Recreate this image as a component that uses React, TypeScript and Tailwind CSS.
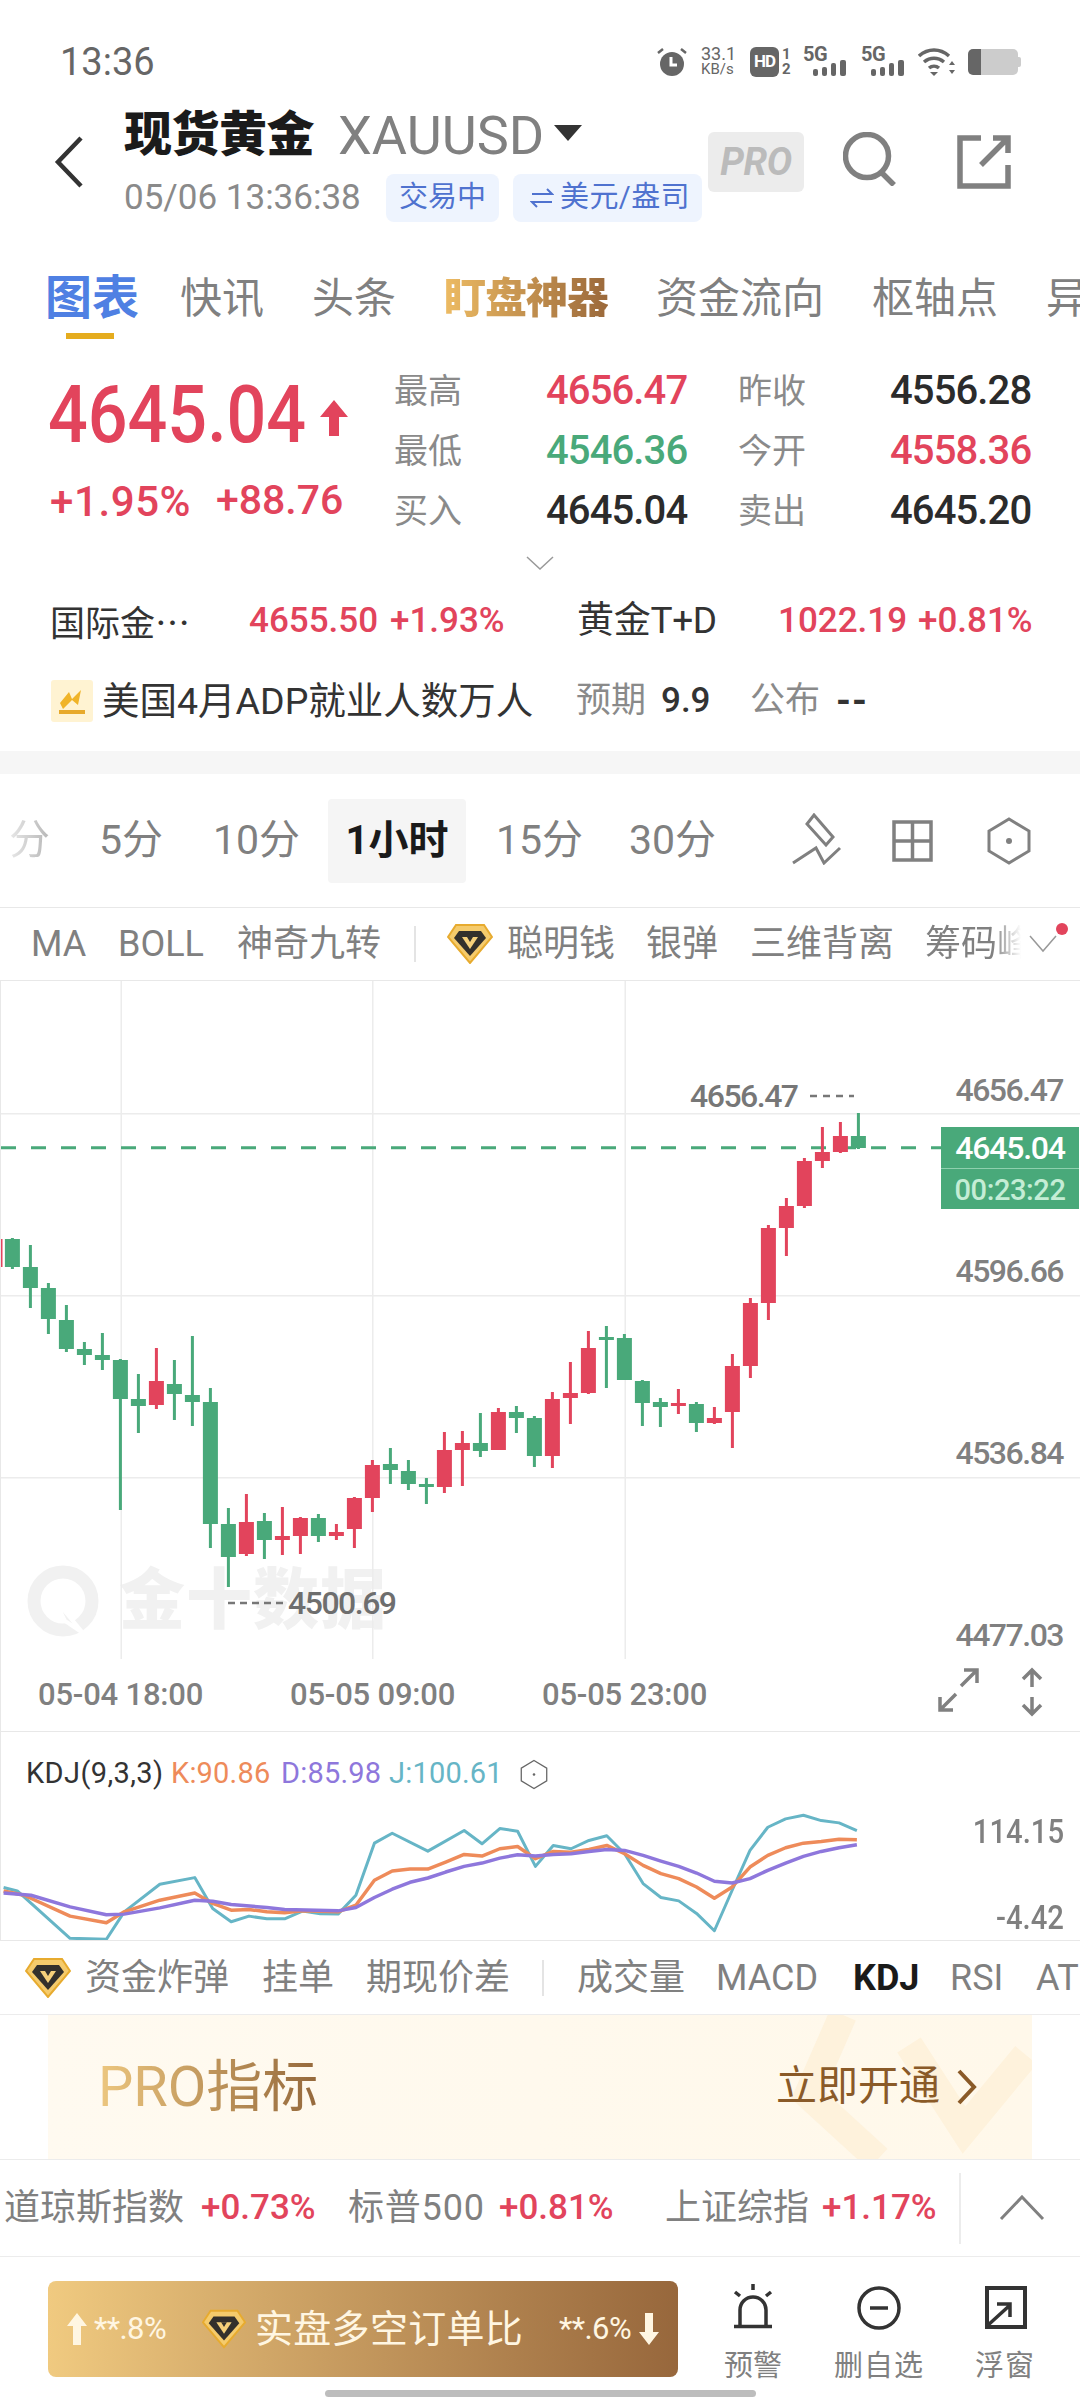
import React from 'react';

const RED = '#e2445c';
const GREEN = '#49a97a';

// [wickTop, bodyTop, bodyBottom, wickBottom, isUp]
const C: [number, number, number, number, number][] = [
  [1237, 1238, 1266, 1268, 0], [1244, 1266, 1287, 1307, 0], [1282, 1287, 1318, 1333, 0], [1304, 1319, 1348, 1351, 0],
  [1341, 1348, 1354, 1364, 0], [1332, 1354, 1359, 1369, 0], [1358, 1359, 1398, 1509, 0], [1373, 1398, 1405, 1432, 0],
  [1347, 1380, 1404, 1408, 1], [1359, 1383, 1393, 1419, 0], [1335, 1394, 1401, 1425, 0], [1387, 1401, 1523, 1547, 0],
  [1507, 1523, 1556, 1586, 0], [1493, 1521, 1553, 1555, 1], [1512, 1520, 1539, 1558, 0], [1506, 1535, 1539, 1554, 1],
  [1516, 1517, 1535, 1553, 1], [1513, 1517, 1535, 1541, 0], [1523, 1531, 1535, 1539, 1], [1496, 1497, 1528, 1547, 1],
  [1459, 1464, 1497, 1511, 1], [1447, 1463, 1469, 1483, 0], [1459, 1470, 1483, 1489, 0], [1477, 1483, 1485, 1503, 0],
  [1431, 1449, 1486, 1492, 1], [1430, 1442, 1449, 1485, 1], [1412, 1442, 1450, 1456, 0], [1407, 1411, 1449, 1449, 1],
  [1405, 1411, 1417, 1432, 0], [1415, 1417, 1455, 1466, 0], [1391, 1398, 1455, 1467, 1], [1361, 1392, 1397, 1423, 1],
  [1330, 1347, 1392, 1393, 1], [1325, 1336, 1338, 1387, 0], [1333, 1337, 1379, 1379, 0], [1379, 1380, 1402, 1425, 0],
  [1397, 1401, 1406, 1426, 0], [1388, 1402, 1405, 1413, 1], [1401, 1403, 1422, 1431, 0], [1406, 1417, 1422, 1423, 1],
  [1353, 1365, 1411, 1447, 1], [1297, 1302, 1365, 1377, 1], [1224, 1227, 1302, 1319, 1], [1197, 1205, 1227, 1255, 1],
  [1157, 1160, 1205, 1207, 1], [1126, 1151, 1160, 1167, 1], [1121, 1135, 1151, 1152, 1], [1112, 1135, 1147, 1148, 0],
];

const J = [[0,622],[20,632],[97,775],[150,778],[176,695],[228,612],[279,592],[305,685],[332,725],[358,708],[384,716],[410,716],[436,693],[462,701],[488,702],[514,645],[541,488],[567,458],[619,512],[672,450],[698,490],[724,444],[750,452],[776,558],[802,495],[828,505],[854,480],[880,466],[906,520],[933,610],[959,652],[985,662],[1011,700],[1037,752],[1063,630],[1089,510],[1115,440],[1141,415],[1167,404],[1193,420],[1219,427],[1245,450]];
const K = [[0,632],[30,645],[97,708],[150,728],[176,695],[228,660],[279,638],[305,670],[332,690],[358,688],[384,695],[410,698],[436,692],[488,695],[514,675],[541,600],[567,572],[593,566],[619,566],[645,545],[672,522],[698,527],[724,505],[750,498],[776,535],[802,513],[828,515],[854,507],[880,495],[906,520],[933,555],[959,580],[985,595],[1011,620],[1037,654],[1063,620],[1089,560],[1115,525],[1141,502],[1167,488],[1193,483],[1219,476],[1245,478]];
const D = [[0,638],[40,645],[97,680],[150,704],[176,702],[228,683],[279,660],[305,663],[332,673],[384,682],[410,688],[488,692],[514,682],[541,652],[567,627],[593,606],[619,593],[645,575],[672,558],[698,548],[724,533],[750,523],[776,527],[802,522],[828,520],[854,513],[880,507],[906,510],[933,525],[959,542],[985,558],[1011,578],[1037,603],[1063,608],[1089,595],[1115,570],[1141,548],[1167,528],[1193,513],[1219,502],[1245,493]];
const pts = (a: number[][]) => a.map(([x, y]) => `${(x / 1.452).toFixed(1)},${(y / 3 + 1680 - 1731).toFixed(1)}`).join(' ');

const Gem = ({ className = '' }: { className?: string }) => (
  <svg viewBox="0 0 46 40" className={className}>
    <polygon points="9,1 37,1 45,13 23,39 1,13" fill="#f5cb6c" stroke="#e7ab2f" strokeWidth="2" />
    <polygon points="12,7 34,7 39,14 23,32 7,14" fill="#33302c" />
    <polygon points="15,13 31,13 23,25" fill="#f6d07a" />
    <polygon points="20,13 26,13 23,18" fill="#33302c" />
  </svg>
);

const Hex = ({ className = '', stroke = 3 }: { className?: string; stroke?: number }) => (
  <svg viewBox="0 0 44 48" className={className} fill="none">
    <polygon points="22,2 42,14 42,34 22,46 2,34 2,14" stroke="currentColor" strokeWidth={stroke} />
    <circle cx="22" cy="24" r={stroke} fill="currentColor" />
  </svg>
);

function Signal() {
  return (
    <svg viewBox="0 0 34 16" className="w-[34px] h-[16px] mt-[-2px] ml-[10px]" fill="#666">
      <rect x="0" y="9" width="5" height="7" rx="2" />
      <rect x="9" y="7" width="5" height="9" rx="2" />
      <rect x="18" y="3" width="5" height="13" rx="2" />
      <rect x="27" y="0" width="6" height="16" rx="2" />
    </svg>
  );
}

function FiveG() {
  return (
    <div className="flex flex-col w-[44px] shrink-0 h-[30px]">
      <span className="text-[20px] leading-[15px] font-bold text-[#666] tracking-[-0.5px]">5G</span>
      <Signal />
    </div>
  );
}

function StatusBar() {
  return (
    <div className="h-[109px] flex items-center shrink-0 pt-[14px]">
      <span className="ml-[60px] text-[38px] text-[#666] leading-none">13:36</span>
      <div className="ml-auto mr-[59px] flex items-center h-[32px]">
        <svg viewBox="0 0 30 30" className="w-[30px] h-[30px]">
          <circle cx="15" cy="17" r="12" fill="#666" />
          <path d="M14 10v8h6" stroke="#fff" strokeWidth="3" fill="none" />
          <path d="M1 6l5-4M29 6l-5-4" stroke="#666" strokeWidth="2.5" />
        </svg>
        <div className="ml-[14px] w-[49px] flex flex-col text-[#666]">
          <span className="text-[18px] leading-[15px]">33.1</span>
          <span className="text-[15px] leading-[15px] mt-[1px]">KB/s</span>
        </div>
        <div className="w-[29px] h-[30px] rounded-[6px] bg-[#666] text-white text-[17px] font-bold flex items-center justify-center tracking-[-1px]">HD</div>
        <div className="ml-[3px] w-[21px] flex flex-col text-[#666] font-bold text-[15px] leading-[15px]">
          <span>1</span>
          <span>2</span>
        </div>
        <FiveG />
        <div className="w-[14px]" />
        <FiveG />
        <svg viewBox="0 0 38 30" className="ml-[13px] w-[38px] h-[30px]" fill="none" stroke="#666" strokeWidth="3.5">
          <path d="M1 9c9-8 21-8 30 0M6 15c6-5 14-5 20 0M11 21c3-2.5 7-2.5 10 0" />
          <path d="M12 25h8l-4 4z" fill="#666" stroke="none" />
          <path d="M31 18l3-4 3 4zM31 23l3 4 3-4z" fill="#666" stroke="none" />
        </svg>
        <div className="ml-[12px] w-[50px] h-[26px] flex rounded-[5px] overflow-hidden">
          <div className="w-[13px] bg-[#666]" />
          <div className="flex-1 bg-[#ccc]" />
        </div>
        <div className="w-[3px] h-[10px] bg-[#ccc] rounded-r-[2px]" />
      </div>
    </div>
  );
}

function Header() {
  return (
    <div className="h-[131px] flex shrink-0 relative">
      <svg viewBox="0 0 30 52" className="ml-[54px] mt-[27px] w-[30px] h-[52px] shrink-0" fill="none" stroke="#333" strokeWidth="4.5">
        <path d="M27 2L4 26l23 24" />
      </svg>
      <div className="ml-[40px] flex flex-col">
        <div className="h-[52px] flex items-center">
          <span className="text-[48px] font-black text-[#1b1b1b] tracking-[-0.5px]">现货黄金</span>
          <span className="ml-[24px] text-[54px] text-[#808080] tracking-[0px]">XAUUSD</span>
          <svg viewBox="0 0 28 16" className="ml-[10px] mt-[-4px] w-[28px] h-[16px]"><path d="M0 0h28L14 16z" fill="#333" /></svg>
        </div>
        <div className="mt-[13px] h-[48px] flex items-center">
          <span className="w-[262px] text-[35px] text-[#8a8a8a]">05/06 13:36:38</span>
          <span className="w-[113px] h-[48px] rounded-[8px] bg-[#eef4fe] text-[#4f72cf] text-[29px] flex items-center justify-center">交易中</span>
          <span className="ml-[14px] w-[189px] h-[48px] rounded-[8px] bg-[#eef4fe] text-[#4f72cf] text-[29px] tracking-[0.4px] flex items-center">
            <svg viewBox="0 0 24 22" className="ml-[17px] w-[24px] h-[22px]" fill="none" stroke="#4f72cf" strokeWidth="2">
              <path d="M2 7h20l-5-5M22 15H2l5 5" />
            </svg>
            <span className="ml-[6px]">美元/盎司</span>
          </span>
        </div>
      </div>
      <div className="absolute left-[708px] top-[23px] flex">
        <div className="w-[96px] h-[60px] rounded-[6px] bg-[#ececec] flex items-center justify-center">
          <span className="text-[38px] font-bold italic text-[#bbbbbb] tracking-[-0.5px]">PRO</span>
        </div>
        <svg viewBox="0 0 54 54" className="ml-[39px] w-[54px] h-[54px]" fill="none" stroke="#808080" strokeWidth="5.5">
          <circle cx="24" cy="24" r="21.5" />
          <path d="M38 40l13 13" />
        </svg>
        <svg viewBox="0 0 54 54" className="ml-[60px] mt-[3px] w-[54px] h-[54px]" fill="none" stroke="#808080" strokeWidth="5.5">
          <path d="M24 3H3v48h48V30M51 18V3H36M50 4L24 30" />
        </svg>
      </div>
    </div>
  );
}

function Tabs() {
  return (
    <div className="shrink-0 h-[120px] pt-[32px]">
      <div className="flex items-center h-[52px] gap-[48px] ml-[45px] text-[42px] text-[#808080]">
        <span className="text-[47px] font-bold text-[#4f80e3] mr-[-7px]">图表</span>
        <span>快讯</span>
        <span>头条</span>
        <span className="font-black tracking-[-1px] bg-linear-to-r from-[#edbb63] to-[#9b693b] bg-clip-text text-transparent">盯盘神器</span>
        <span>资金流向</span>
        <span>枢轴点</span>
        <span>异</span>
      </div>
      <div className="ml-[66px] mt-[9px] w-[48px] h-[6px] bg-[#e5ac1e]" />
    </div>
  );
}

const statNum = 'text-[40px] font-medium tracking-[-0.9px]';

function Stat({ label, value, color }: { label: string; value: string; color: string }) {
  return (
    <>
      <span className="text-[34px] text-[#8a8a8a]">{label}</span>
      <span className={`${statNum} ${color}`}>{value}</span>
    </>
  );
}

function Price() {
  return (
    <div className="shrink-0 flex">
      <div className="ml-[48px] w-[346px] flex flex-col">
        <div className="h-[110px] flex items-center">
          <span className="text-[80px] leading-none font-medium origin-left scale-x-[0.875] mr-[-36px] text-[#e2445c]">4645.04</span>
          <svg viewBox="0 0 30 36" className="ml-[12px] mt-[6px] w-[30px] h-[36px]" fill="#e2445c">
            <path d="M15 0l14 17h-9v19h-10V17H1z" />
          </svg>
        </div>
        <div className="h-[62px] ml-[2px] flex items-center text-[41px] font-medium text-[#e2445c]">
          <span className="w-[166px] text-[42px] tracking-[0.6px]">+1.95%</span>
          <span>+88.76</span>
        </div>
      </div>
      <div className="mt-[1px] grid grid-cols-[152px_192px_152px_150px] auto-rows-[60px] items-center">
        <Stat label="最高" value="4656.47" color="text-[#e2445c]" />
        <Stat label="昨收" value="4556.28" color="text-[#2b2b2b]" />
        <Stat label="最低" value="4546.36" color="text-[#49a97a]" />
        <Stat label="今开" value="4558.36" color="text-[#e2445c]" />
        <Stat label="买入" value="4645.04" color="text-[#2b2b2b]" />
        <Stat label="卖出" value="4645.20" color="text-[#2b2b2b]" />
      </div>
    </div>
  );
}

const rowNum = 'text-[35px] font-medium text-[#e2445c]';

function Quotes() {
  return (
    <div className="shrink-0">
      <div className="h-[50px] flex justify-center pt-[15px]">
        <svg viewBox="0 0 28 14" className="w-[28px] h-[14px]" fill="none" stroke="#999" strokeWidth="1.5"><path d="M1 1l13 12L27 1" /></svg>
      </div>
      <div className="h-[60px] flex items-center ml-[50px]">
        <span className="w-[199px] text-[35px] text-[#333] font-['Noto_Sans_CJK_SC',sans-serif]">国际金…</span>
        <span className={`w-[141px] ${rowNum}`}>4655.50</span>
        <span className={`w-[187px] ${rowNum}`}>+1.93%</span>
        <span className="w-[201px] text-[37px] text-[#333] tracking-[-0.3px]">黄金T+D</span>
        <span className={`w-[140px] ${rowNum}`}>1022.19</span>
        <span className={rowNum}>+0.81%</span>
      </div>
      <div className="h-[20px]" />
      <div className="h-[60px] flex items-center ml-[51px]">
        <div className="w-[42px] h-[42px] bg-[#fff3d2] rounded-[3px] flex items-center justify-center">
          <svg viewBox="0 0 32 32" className="w-[32px] h-[32px]" fill="none">
            <path d="M4 18L13 7l3 7 9-9-3 15-6-5-9 9" fill="#f0b429" />
            <path d="M3 27h26" stroke="#e7a92a" strokeWidth="4" />
          </svg>
        </div>
        <span className="ml-[9px] w-[474px] text-[37.500px]  text-[#333]">美国4月ADP就业人数万人</span>
        <span className="w-[85px] text-[35px] text-[#8a8a8a]">预期</span>
        <span className="w-[89px] text-[35px] font-medium text-[#333]">9.9</span>
        <span className="w-[86px] text-[35px] text-[#8a8a8a]">公布</span>
        <span className="text-[38px] font-bold text-[#333] tracking-[1px]">--</span>
      </div>
      <div className="h-[20px]" />
    </div>
  );
}

const period = 'text-[41px] text-[#808080]';

function Periods() {
  return (
    <div className="shrink-0 h-[134px] flex items-center border-b border-[#e8e8e8] relative">
      <span className="ml-[9px] w-[90px] text-[41px] bg-linear-to-r from-[#e8e8e8] to-[#808080] bg-clip-text text-transparent">
        <span className="inline-block">分</span>
      </span>
      <span className={`w-[114px] ${period}`}>5分</span>
      <span className={`w-[115px] ${period}`}>10分</span>
      <span className="w-[138px] h-[84px] rounded-[4px] bg-[#f5f5f5] flex items-center justify-center text-[40px] font-bold text-[#1a1a1a]">1小时</span>
      <span className={`ml-[30px] w-[133px] ${period}`}>15分</span>
      <span className={`w-[163px] ${period}`}>30分</span>
      <svg viewBox="0 0 50 52" className="w-[50px] h-[52px] shrink-0 mt-[-4px]" fill="none" stroke="#808080" strokeWidth="3">
        <path d="M22 2l19 22-7 8L15 11z" />
        <path d="M1 50l23-15 8 15 16-15" />
      </svg>
      <svg viewBox="0 0 41 42" className="ml-[50px] w-[41px] h-[42px] shrink-0" fill="none" stroke="#808080" strokeWidth="3.5">
        <rect x="2" y="2" width="37" height="38" />
        <path d="M20.500 2v38M2 21h37" />
      </svg>
      <Hex className="ml-[54px] w-[44px] h-[48px] shrink-0 text-[#808080]" />
    </div>
  );
}

const ind = 'text-[36px] text-[#808080] shrink-0';

function Indicators() {
  return (
    <div className="shrink-0 h-[73px] flex items-center border-b border-[#e8e8e8] relative overflow-hidden">
      <span className={`ml-[31px] w-[87px] ${ind}`}>MA</span>
      <span className={`w-[119px] ${ind}`}>BOLL</span>
      <span className={`w-[177px] ${ind}`}>神奇九转</span>
      <span className="w-[2px] h-[36px] bg-[#e4e4e4] mr-[31px] shrink-0" />
      <Gem className="w-[46px] h-[40px] mr-[14px] shrink-0" />
      <span className={`w-[139px] ${ind}`}>聪明钱</span>
      <span className={`w-[104px] ${ind}`}>银弹</span>
      <span className={`w-[175px] ${ind}`}>三维背离</span>
      <span className="w-[96px] shrink-0 text-[36px] whitespace-nowrap overflow-hidden bg-linear-to-r from-[#808080] from-70% to-[#fff] bg-clip-text text-transparent">筹码峰</span>
      <svg viewBox="0 0 28 18" className="ml-[8px] w-[28px] h-[18px] shrink-0" fill="none" stroke="#999" strokeWidth="1.5"><path d="M1 1l13 15L27 1" /></svg>
      <span className="absolute left-[1056px] top-[15px] w-[12px] h-[12px] rounded-full bg-[#e2445c]" />
    </div>
  );
}

const axis = 'absolute right-[17px] text-[32px] font-medium text-[#808080] tracking-[-1.5px] leading-none';

function Chart() {
  return (
    <div className="shrink-0 relative h-[678px] border-l border-[#e8e8e8]">
      <div className="absolute left-[26px] top-[570px] flex items-center">
        <svg viewBox="0 0 72 72" className="w-[72px] h-[72px]" fill="none">
          <circle cx="36" cy="36" r="29" stroke="#f1f1f1" strokeWidth="13" />
          <path d="M26 32l30 36-18-12z" fill="#f1f1f1" stroke="#fff" strokeWidth="4" />
        </svg>
        <span className="ml-[20px] text-[66px] font-black text-[#f1f1f1] tracking-[1px]">金十数据</span>
      </div>
      <svg viewBox="0 0 1079 678" className="absolute inset-0 w-[1079px] h-[678px]">
        {[132, 314, 496].map((y) => <rect key={y} x="0" y={y} width="1079" height="1.500" fill="#ececec" />)}
        {[119.500, 371, 623.500].map((x) => <rect key={x} x={x} y="0" width="1.500" height="678" fill="#ececec" />)}
        <line x1="0" y1="166.700" x2="940" y2="166.700" stroke={GREEN} strokeWidth="3" strokeDasharray="15 15" />
        <rect x="0" y="258" width="1.500" height="28" fill={RED} />
        {C.map((c, i) => {
          const x = 11.400 + 18 * i;
          const col = c[4] ? RED : GREEN;
          return (
            <g key={i} fill={col}>
              <rect x={x - 1.500} y={c[0] - 980} width="3" height={c[3] - c[0]} />
              <rect x={x - 7.500} y={c[1] - 980} width="15" height={Math.max(c[2] - c[1], 3)} />
            </g>
          );
        })}
        <line x1="809" y1="115" x2="853" y2="115" stroke="#777" strokeWidth="2.500" strokeDasharray="7 6" />
        <line x1="227" y1="622" x2="282" y2="622" stroke="#777" strokeWidth="2.500" strokeDasharray="7 5" />
      </svg>
      <span className={`${axis} top-[93px]`}>4656.47</span>
      <span className="absolute left-[689px] top-[99px] text-[32px] leading-none font-medium text-[#777] tracking-[-1.5px]">4656.47</span>
      <span className="absolute left-[287px] top-[606px] text-[32px] leading-none font-medium text-[#6e6e6e] tracking-[-1.5px]">4500.69</span>
      <div className="absolute left-[940px] top-[146px] w-[138px] h-[82px] bg-[#49a97a] flex flex-col items-center">
        <span className="h-[42px] w-full flex items-center justify-center text-[32px] font-medium text-white tracking-[-1.2px] border-b border-[#8fd0ae]">4645.04</span>
        <span className="flex-1 flex items-center justify-center text-[29px] font-medium text-[#c4edd5] tracking-[-0.4px]">00:23:22</span>
      </div>
      <span className={`${axis} top-[274px]`}>4596.66</span>
      <span className={`${axis} top-[456px]`}>4536.84</span>
      <span className={`${axis} top-[638px]`}>4477.03</span>
    </div>
  );
}

function TimeRow() {
  return (
    <div className="shrink-0 h-[73px] flex items-center border-b border-l border-[#e8e8e8] text-[31px] text-[#808080] font-medium tracking-[-0.2px]">
      <span className="ml-[37px] w-[252px]">05-04 18:00</span>
      <span className="w-[252px]">05-05 09:00</span>
      <span className="w-[394px]">05-05 23:00</span>
      <svg viewBox="0 0 44 46" className="w-[44px] h-[46px] mt-[-10px] shrink-0" fill="none" stroke="#808080" strokeWidth="3.5">
        <path d="M25 19L41 3M28 3h13v13M20 27L4 43M4 30v13h13" />
      </svg>
      <svg viewBox="0 0 24 50" className="ml-[40px] w-[24px] h-[50px] mt-[-6px] shrink-0" fill="none" stroke="#808080" strokeWidth="3.5">
        <path d="M12 20V3M3 12l9-9 9 9M12 30v17M3 38l9 9 9-9" />
      </svg>
    </div>
  );
}

const kdjAxis = 'absolute right-[16px] origin-right scale-x-[0.86] text-[34px] font-medium leading-none text-[#808080]';

function Kdj() {
  return (
    <div className="shrink-0 h-[209px] relative border-b border-l border-[#e8e8e8]">
      <svg viewBox="0 0 1079 209" className="absolute inset-0 w-[1079px] h-[208px]" fill="none" strokeWidth="3" strokeLinejoin="round">
        <polyline points={pts(J)} stroke="#66b5c6" />
        <polyline points={pts(K)} stroke="#ee8b5a" strokeWidth="3.500" />
        <polyline points={pts(D)} stroke="#8e77dc" strokeWidth="3.500" />
      </svg>
      <div className="relative flex items-center h-[42px] mt-[21px] text-[29px]">
        <span className="ml-[25px] w-[145px] text-[#333] tracking-[0.4px]">KDJ(9,3,3)</span>
        <span className="w-[110px] text-[#ee8b5a] tracking-[0.2px]">K:90.86</span>
        <span className="w-[108px] text-[#8e77dc] tracking-[0.2px]">D:85.98</span>
        <span className="w-[131px] text-[#66b5c6] tracking-[0.2px]">J:100.61</span>
        <Hex className="w-[28px] h-[31px] text-[#666]" stroke={2} />
      </div>
      <span className={`${kdjAxis} top-[82px]`}>114.15</span>
      <span className={`${kdjAxis} top-[168px]`}>-4.42</span>
    </div>
  );
}

const ind2 = 'text-[36px] text-[#808080] shrink-0';

function Indicators2() {
  return (
    <div className="shrink-0 h-[74px] flex items-center border-b border-[#ececec] overflow-hidden whitespace-nowrap">
      <Gem className="ml-[25px] w-[46px] h-[40px] mr-[14px] shrink-0" />
      <span className={`w-[177px] ${ind2}`}>资金炸弹</span>
      <span className={`w-[104px] ${ind2}`}>挂单</span>
      <span className={`w-[176px] ${ind2}`}>期现价差</span>
      <span className="w-[2px] h-[36px] bg-[#e4e4e4] mr-[33px] shrink-0" />
      <span className={`w-[139px] ${ind2}`}>成交量</span>
      <span className={`w-[137px] ${ind2}`}>MACD</span>
      <span className="w-[97px] text-[36px] font-bold text-[#1a1a1a] shrink-0">KDJ</span>
      <span className={`w-[86px] ${ind2}`}>RSI</span>
      <span className={ind2}>AT</span>
    </div>
  );
}

function Banner() {
  return (
    <div className="shrink-0 h-[144px] mx-[48px] relative flex items-center bg-linear-to-r from-[#fffaf0] to-[#fff8ea] overflow-hidden">
      <svg viewBox="0 0 984 144" className="absolute inset-0 w-[984px] h-[144px]" fill="none" stroke="#fef2dc" strokeWidth="28">
        <path d="M795 0L760 80l70 64" />
        <path d="M861 30l55 85 62-75" />
      </svg>
      <span className="relative ml-[50px] text-[56px] bg-linear-to-r from-[#edc77f] to-[#95693c] bg-clip-text text-transparent">PRO指标</span>
      <span className="relative ml-auto text-[41px] text-[#8a5a28]">立即开通</span>
      <svg viewBox="0 0 22 36" className="relative ml-[16px] mr-[54px] w-[22px] h-[36px]" fill="none" stroke="#8a5a28" strokeWidth="4"><path d="M3 2l15 16L3 34" /></svg>
    </div>
  );
}

function Indices() {
  return (
    <div className="shrink-0 h-[98px] flex items-center border-y border-[#ececec]">
      <span className="ml-[4px] w-[197px] text-[36px] text-[#808080]">道琼斯指数</span>
      <span className={`w-[147px] ${rowNum}`}>+0.73%</span>
      <span className="w-[151px] text-[36px] text-[#808080] tracking-[0.8px]">标普500</span>
      <span className={`w-[166px] ${rowNum}`}>+0.81%</span>
      <span className="w-[157px] text-[36px] text-[#808080]">上证综指</span>
      <span className={`w-[137px] ${rowNum}`}>+1.17%</span>
      <span className="w-[2px] h-[71px] bg-[#ececec] shrink-0" />
      <svg viewBox="0 0 46 26" className="ml-[38px] w-[46px] h-[26px]" fill="none" stroke="#808080" strokeWidth="3"><path d="M2 24L23 2l21 22" /></svg>
    </div>
  );
}

const toolLabel = 'mt-[19px] text-[29px] text-[#808080] leading-[30px]';

function BottomBar() {
  return (
    <div className="flex-1 flex flex-col">
      <div className="flex items-start pt-[24px]">
        <div className="ml-[48px] w-[630px] h-[96px] rounded-[8px] bg-linear-to-r from-[#f0ca80] to-[#97673c] flex items-center text-[#fff6e2]">
          <svg viewBox="0 0 20 32" className="ml-[19px] w-[20px] h-[32px]" fill="#fff6e2"><path d="M10 0l10 13h-6v19H6V13H0z" /></svg>
          <span className="ml-[7px] w-[108px] text-[31px] tracking-[-0.6px]">**.8%</span>
          <Gem className="w-[44px] h-[40px]" />
          <span className="ml-[9px] w-[304px] text-[38px] tracking-[0.3px]">实盘多空订单比</span>
          <span className="w-[80px] text-[31px] tracking-[-0.6px]">**.6%</span>
          <svg viewBox="0 0 20 32" className="w-[20px] h-[32px]" fill="#fff6e2"><path d="M10 32l10-13h-6V0H6v19H0z" /></svg>
        </div>
        <div className="mt-[3px] ml-[15px] w-[120px] flex flex-col items-center">
          <svg viewBox="0 0 42 48" className="w-[42px] h-[48px]" fill="none" stroke="#333" strokeWidth="3.500">
            <path d="M21 0v6M3 8l5 4M39 8l-5 4M8 41V26a13 13 0 0 1 26 0v15M2 42.500h38" />
          </svg>
          <span className={toolLabel}>预警</span>
        </div>
        <div className="mt-[3px] ml-[10px] w-[112px] flex flex-col items-center">
          <svg viewBox="0 0 48 48" className="w-[48px] h-[48px]" fill="none" stroke="#333" strokeWidth="3.500">
            <circle cx="24" cy="24" r="20" />
            <path d="M15 24h18" />
          </svg>
          <span className={`${toolLabel} tracking-[1px]`}>删自选</span>
        </div>
        <div className="mt-[3px] ml-[22px] w-[96px] flex flex-col items-center">
          <svg viewBox="0 0 48 48" className="w-[48px] h-[48px]" fill="none">
            <path d="M6 4h38v39H6z" stroke="#333" strokeWidth="4" />
            <path d="M30 6h12v12H30z" fill="#fff" />
            <path d="M6 42l22-20M16 20h13v13" stroke="#333" strokeWidth="3.500" />
          </svg>
          <span className={`${toolLabel} tracking-[1px]`}>浮窗</span>
        </div>
      </div>
      <div className="mt-auto mb-[3px] mx-auto w-[431px] h-[7px] rounded-full bg-[#bdbdbd]" />
    </div>
  );
}

export default function App() {
  return (
    <div className="w-[1080px] h-[2400px] overflow-hidden bg-white flex flex-col whitespace-nowrap font-['Roboto','Noto_Sans_CJK_SC',sans-serif]">
      <StatusBar />
      <Header />
      <Tabs />
      <Price />
      <Quotes />
      <div className="shrink-0 h-[23px] bg-[#f6f6f6]" />
      <Periods />
      <Indicators />
      <Chart />
      <TimeRow />
      <Kdj />
      <Indicators2 />
      <Banner />
      <Indices />
      <BottomBar />
    </div>
  );
}
